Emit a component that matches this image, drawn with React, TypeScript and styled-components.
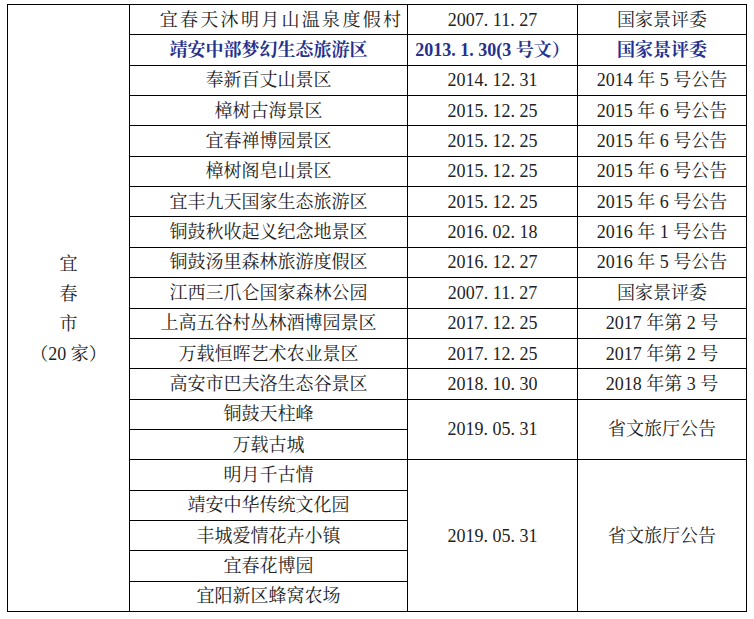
import React from 'react';
import styled, { createGlobalStyle } from 'styled-components';

const GlobalStyle = createGlobalStyle`
  html, body {
    margin: 0;
    padding: 0;
    background: #fff;
  }

  body {
    font-family: "Liberation Serif", "Noto Serif CJK SC", "Noto Sans CJK SC", serif;
    color: #222;
  }
`;

type Group = {
  names: string[];
  date: string;
  note: string;
  accent?: boolean;
  wide?: boolean;
};

const groups: Group[] = [
  { names: ['宜春天沐明月山温泉度假村'], date: '2007.11.27', note: '国家景评委', wide: true },
  { names: ['靖安中部梦幻生态旅游区'], date: '2013.1.30(3 号文）', note: '国家景评委', accent: true },
  { names: ['奉新百丈山景区'], date: '2014.12.31', note: '2014 年 5 号公告' },
  { names: ['樟树古海景区'], date: '2015.12.25', note: '2015 年 6 号公告' },
  { names: ['宜春禅博园景区'], date: '2015.12.25', note: '2015 年 6 号公告' },
  { names: ['樟树阁皂山景区'], date: '2015.12.25', note: '2015 年 6 号公告' },
  { names: ['宜丰九天国家生态旅游区'], date: '2015.12.25', note: '2015 年 6 号公告' },
  { names: ['铜鼓秋收起义纪念地景区'], date: '2016.02.18', note: '2016 年 1 号公告' },
  { names: ['铜鼓汤里森林旅游度假区'], date: '2016.12.27', note: '2016 年 5 号公告' },
  { names: ['江西三爪仑国家森林公园'], date: '2007.11.27', note: '国家景评委' },
  { names: ['上高五谷村丛林酒博园景区'], date: '2017.12.25', note: '2017 年第 2 号' },
  { names: ['万载恒晖艺术农业景区'], date: '2017.12.25', note: '2017 年第 2 号' },
  { names: ['高安市巴夫洛生态谷景区'], date: '2018.10.30', note: '2018 年第 3 号' },
  { names: ['铜鼓天柱峰', '万载古城'], date: '2019.05.31', note: '省文旅厅公告' },
  {
    names: ['明月千古情', '靖安中华传统文化园', '丰城爱情花卉小镇', '宜春花博园', '宜阳新区蜂窝农场'],
    date: '2019.05.31',
    note: '省文旅厅公告',
  },
];

const totalRows = groups.reduce((sum, g) => sum + g.names.length, 0);

// SimSun-like wide period: each "." takes half an em
const renderDate = (date: string) =>
  date.split('.').map((part, i) => (
    <React.Fragment key={i}>
      {i > 0 && <Dot>.</Dot>}
      {part}
    </React.Fragment>
  ));

export default function App() {
  let row = 1;

  return (
    <>
      <GlobalStyle />
      <Page>
        <Sheet $rows={totalRows}>
          <RegionCell $span={totalRows}>
            <span>宜</span>
            <span>春</span>
            <span>市</span>
            <span>（20 家）</span>
          </RegionCell>
          {groups.map((g, gi) => {
            const start = row;
            row += g.names.length;
            return (
              <React.Fragment key={gi}>
                {g.names.map((name, ni) => (
                  <NameCell
                    key={name}
                    $row={start + ni}
                    $accent={g.accent}
                    $wide={g.wide}
                  >
                    {name}
                  </NameCell>
                ))}
                <DateCell $row={start} $span={g.names.length} $accent={g.accent}>
                  {renderDate(g.date)}
                </DateCell>
                <NoteCell $row={start} $span={g.names.length} $accent={g.accent}>
                  {g.note}
                </NoteCell>
              </React.Fragment>
            );
          })}
        </Sheet>
      </Page>
    </>
  );
}

const Page = styled.div`
  width: 754px;
  height: 619px;
  padding: 4px 0 0 7px;
  box-sizing: border-box;
  overflow: hidden;
`;

const Sheet = styled.div<{ $rows: number }>`
  display: grid;
  grid-template-columns: 121px 277px 169px 168px;
  grid-template-rows: repeat(${(p) => p.$rows}, 1fr);
  gap: 1px;
  padding: 1px;
  width: 740px;
  height: 608px;
  box-sizing: border-box;
  background: #000;
`;

const Cell = styled.div<{ $row?: number; $span?: number; $accent?: boolean }>`
  display: flex;
  align-items: center;
  justify-content: center;
  background: #fff;
  font-size: 18px;
  line-height: 1;
  white-space: nowrap;
  grid-row: ${(p) => p.$row ?? 1} / span ${(p) => p.$span ?? 1};
  color: ${(p) => (p.$accent ? '#25318f' : '#222')};
  font-weight: ${(p) => (p.$accent ? 700 : 400)};
`;

const RegionCell = styled(Cell)`
  grid-column: 1;
  flex-direction: column;
  line-height: 30px;
  padding-top: 1px;
`;

const NameCell = styled(Cell)<{ $wide?: boolean }>`
  grid-column: 2;
  letter-spacing: ${(p) => (p.$wide ? '2.3px' : '0')};
  padding-left: ${(p) => (p.$wide ? '26px' : '0')};
`;

const DateCell = styled(Cell)`
  grid-column: 3;
`;

const NoteCell = styled(Cell)`
  grid-column: 4;
`;

const Dot = styled.span`
  display: inline-block;
  width: 0.5em;
  text-align: left;
`;
